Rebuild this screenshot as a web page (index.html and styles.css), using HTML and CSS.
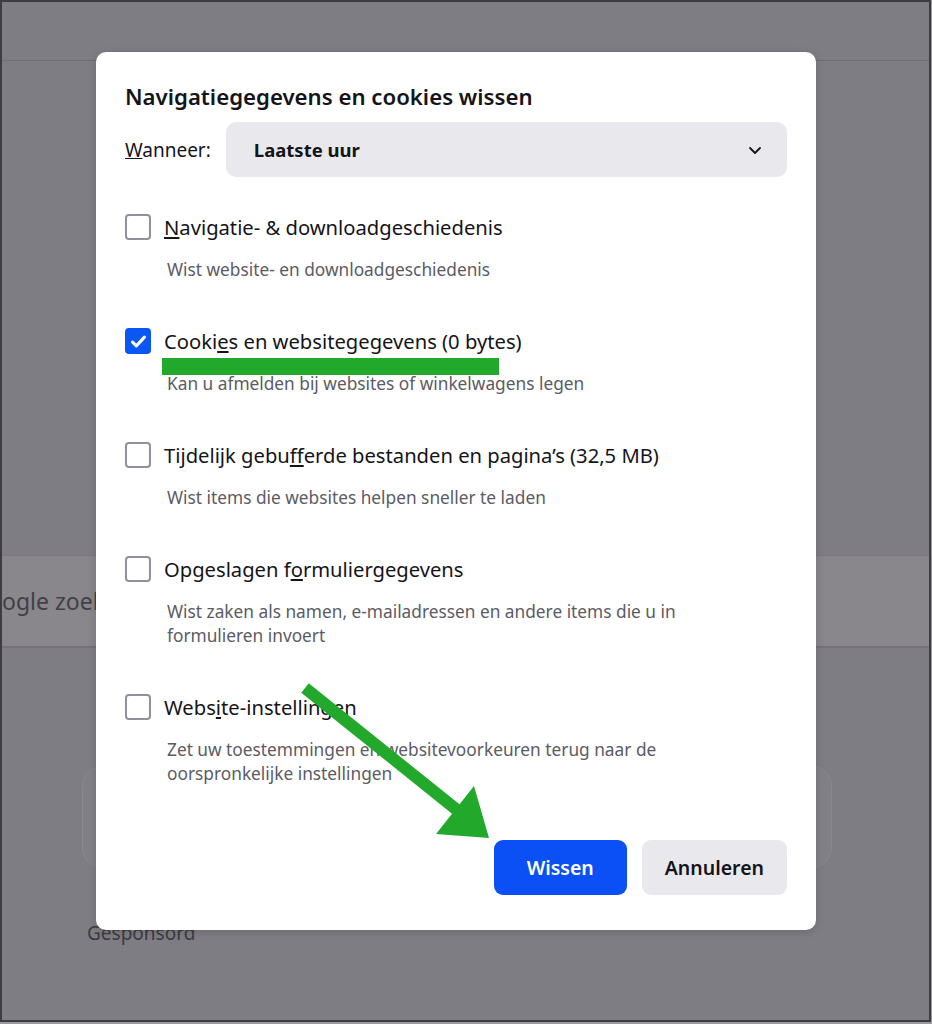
FILE: index.html
```html
<!DOCTYPE html>
<html lang="nl">
<head>
<meta charset="utf-8">
<title>Navigatiegegevens en cookies wissen</title>
<link rel="stylesheet" href="styles.css">
</head>
<body>
<div class="screen">
    <!-- pagina achter het dialoogvenster -->
    <div class="topbar"></div>
    <div class="searchband"><span class="searchtext">ogle zoeken</span></div>
    <div class="card"></div>
    <div class="sponsored">Gesponsord</div>

    <!-- dialoog -->
    <div class="dialog">
        <h1 class="title">Navigatiegegevens en cookies wissen</h1>

        <div class="when">
            <span class="when-label"><u>W</u>anneer:</span>
            <div class="select">
                <span>Laatste uur</span>
                <svg class="chevron" width="16" height="16" viewBox="0 0 16 16">
                    <path d="M3 6l5 5 5-5" fill="none" stroke="#15141a" stroke-width="1.8" stroke-linecap="round" stroke-linejoin="round"/>
                </svg>
            </div>
        </div>

        <div class="options">
            <div class="option">
                <div class="line"><span class="box"></span><span class="label"><u>N</u>avigatie- &amp; downloadgeschiedenis</span></div>
                <div class="desc">Wist website- en downloadgeschiedenis</div>
            </div>
            <div class="option">
                <div class="line">
                    <span class="box checked">
                        <svg width="19" height="19" viewBox="0 0 16 16"><path d="M3 8.5l3.2 3.2L13 4.3" fill="none" stroke="#fff" stroke-width="2.6" stroke-linecap="round" stroke-linejoin="round"/></svg>
                    </span>
                    <span class="label">Cooki<u>e</u>s en websitegegevens (0 bytes)</span>
                </div>
                <div class="desc">Kan u afmelden bij websites of winkelwagens legen</div>
            </div>
            <div class="option">
                <div class="line"><span class="box"></span><span class="label">Tijdelijk gebu<u>f</u>ferde bestanden en pagina’s (32,5 MB)</span></div>
                <div class="desc">Wist items die websites helpen sneller te laden</div>
            </div>
            <div class="option">
                <div class="line"><span class="box"></span><span class="label">Opgeslagen f<u>o</u>rmuliergegevens</span></div>
                <div class="desc">Wist zaken als namen, e-mailadressen en andere items die u in<br>formulieren invoert</div>
            </div>
            <div class="option">
                <div class="line"><span class="box"></span><span class="label">Webs<u>i</u>te-instellingen</span></div>
                <div class="desc">Zet uw toestemmingen en websitevoorkeuren terug naar de<br>oorspronkelijke instellingen</div>
            </div>
        </div>

        <div class="buttons">
            <button class="btn primary">Wissen</button>
            <button class="btn">Annuleren</button>
        </div>
    </div>

    <!-- markeringen -->
    <svg class="marks" width="932" height="1024" viewBox="0 0 932 1024">
        <rect x="162" y="358" width="337" height="17" fill="#22a82a"/>
        <line x1="305" y1="688" x2="462" y2="814" stroke="#22a82a" stroke-width="12"/>
        <polygon points="436,834 474,786 489,838" fill="#22a82a"/>
    </svg>
</div>
</body>
</html>
```

FILE: styles.css
```css
/* pagina */
body {
    margin: 0;
    background: #9a999d;
    font-family: "Noto Sans", "Open Sans", sans-serif;
}

.screen {
    position: relative;
    width: 927px;
    height: 1018px;
    border: 2px solid #3d3c40;
    background: #7f7d84;
    overflow: hidden;
}

.topbar {
    height: 58px;
    border-bottom: 1px solid #706e75;
}

.searchband {
    margin-top: 494px;
    height: 90px;
    background: #89878c;
    border-top: 1px solid #7a787e;
    border-bottom: 2px solid #75737a;
    display: flex;
    align-items: center;
}

.searchtext {
    font-size: 23px;
    color: #414045;
}

.card {
    margin: 118px 0 0 80px;
    width: 748px;
    height: 100px;
    border: 1px solid #8a888e;
    border-radius: 20px;
    background: #828087;
}

.sponsored {
    margin: 53px 0 0 85px;
    font-size: 19px;
    line-height: 24px;
    color: #3c3b40;
}

/* dialoog */
.dialog {
    position: absolute;
    left: 94px;
    top: 50px;
    width: 720px;
    height: 878px;
    box-sizing: border-box;
    padding: 31px 29px 35px 29px;
    background: #fff;
    border-radius: 10px;
    box-shadow: 0 2px 10px rgba(0, 0, 0, 0.15);
    display: flex;
    flex-direction: column;
    color: #15141a;
}

.title {
    margin: 0;
    font-size: 22.2px;
    line-height: 28px;
    font-weight: 600;
}

.when {
    display: flex;
    align-items: center;
    gap: 15px;
    margin-top: 11px;
}

.when-label {
    font-size: 19px;
}

.select {
    flex: 1;
    height: 55px;
    border-radius: 10px;
    background: #e9e9ed;
    display: flex;
    align-items: center;
    justify-content: space-between;
    padding: 0 24px 0 28px;
    font-size: 18.5px;
    font-weight: 700;
}

.options {
    margin-top: 36px;
    display: flex;
    flex-direction: column;
    gap: 45px;
}

.line {
    display: flex;
    align-items: center;
    gap: 13px;
    height: 28px;
}

.box {
    width: 22px;
    height: 22px;
    border: 2px solid #8f8f9d;
    border-radius: 4px;
    display: flex;
    align-items: center;
    justify-content: center;
}

.box.checked {
    background: #0b57f4;
    border-color: #0b57f4;
}

.label {
    font-size: 20.2px;
}

.desc {
    margin-top: 17px;
    padding-left: 42px;
    font-size: 17.3px;
    line-height: 24px;
    color: #5b5b66;
}

.buttons {
    margin-top: auto;
    display: flex;
    justify-content: flex-end;
    gap: 15px;
}

.btn {
    height: 55px;
    padding: 0 23px;
    border: none;
    border-radius: 9px;
    background: #e9e9ed;
    color: #15141a;
    font-family: inherit;
    font-size: 19.5px;
    font-weight: 600;
}

.btn.primary {
    width: 133px;
    background: #0b50f5;
    color: #fff;
}

.marks {
    position: absolute;
    left: -2px;
    top: -2px;
    pointer-events: none;
}
```
